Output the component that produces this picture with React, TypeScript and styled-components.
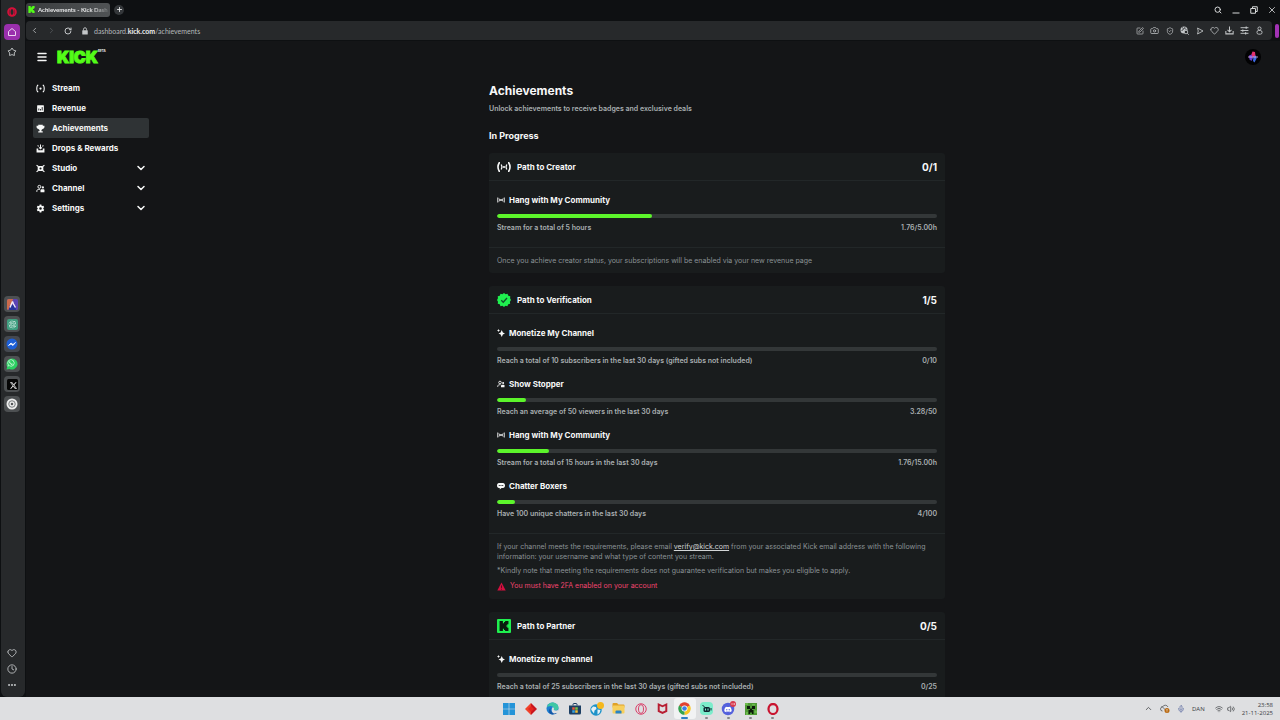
import React from "react";
import styled, { createGlobalStyle, css } from "styled-components";
import {
  Camera,
  ChevronDown,
  ChevronLeft,
  ChevronRight,
  ChevronUp,
  Clock,
  Ellipsis,
  Heart,
  Menu,
  Mic,
  Plus,
  RotateCw,
  Search,
  ShieldCheck,
  SquarePen,
  Volume2,
  Wifi,
  X,
} from "lucide-react";
import { SiKick, SiMcafee, SiOpenai } from "react-icons/si";
import { FaDiscord, FaWhatsapp, FaXTwitter } from "react-icons/fa6";

const color = {
  frame: "#0e1012",
  chrome: "#27292b",
  page: "#141517",
  card: "#191c1d",
  line: "#222728",
  track: "#333738",
  text: "#f7f8f8",
  soft: "#a9afb1",
  muted: "#8b9295",
  green: "#53fc18",
  pink: "#f0456f",
};

const GlobalStyle = createGlobalStyle`
  *, *::before, *::after { box-sizing: border-box; }
  body { margin: 0; background: ${color.frame}; }
  h1, h2, h3, h4, p, ul { margin: 0; padding: 0; }
  ul { list-style: none; }
  svg { display: block; flex: none; }
`;

const Desktop = styled.div`
  display: flex;
  flex-direction: column;
  height: 100vh;
  overflow: hidden;
  font-family: Inter, "Liberation Sans", sans-serif;
  color: ${color.text};
`;

const Browser = styled.div`
  display: flex;
  flex: 1;
  min-height: 0;
  background: ${color.frame};
`;

const bareButton = css`
  display: flex;
  align-items: center;
  justify-content: center;
  padding: 0;
  border: 0;
  background: none;
  color: inherit;
  font: inherit;
`;

/* ---------- Browser side rail ---------- */

const Rail = styled.aside`
  display: flex;
  flex-direction: column;
  align-items: center;
  justify-content: space-between;
  width: 24px;
  margin: 0 1px;
  padding: 4px 2px 4px 0;
  border-radius: 0 0 6px 6px;
  background: ${color.chrome};
  color: #c6c9cb;
`;

const RailGroup = styled.div<{ $gap: number; $top?: number }>`
  display: flex;
  flex-direction: column;
  gap: ${(p) => p.$gap}px;
  padding-top: ${(p) => p.$top ?? 0}px;
`;

const RailButton = styled.button<{ $fill?: string }>`
  ${bareButton}
  width: 16px;
  height: 16px;
  border-radius: 4px;
  background: ${(p) => p.$fill ?? "none"};
`;

/* ---------- Browser top bars ---------- */

const Window = styled.div`
  display: flex;
  flex-direction: column;
  flex: 1;
  min-width: 0;
`;

const TitleBar = styled.div`
  display: flex;
  align-items: center;
  height: 21px;
  padding: 0 2px 2px 0;
`;

const Tab = styled.button`
  ${bareButton}
  justify-content: flex-start;
  gap: 3px;
  width: 84px;
  height: 14px;
  padding: 0 2px;
  border-radius: 3px;
  background: linear-gradient(90deg, #3a3d3f, #505355);
  font-family: Lato, "Open Sans", sans-serif;
  font-size: 6px;
  line-height: 10px;
`;

const TabTitle = styled.span`
  flex: 1;
  white-space: nowrap;
  text-align: left;
  font-weight: 700;
  color: #e6e7e8;
  mask-image: linear-gradient(90deg, #000 75%, rgba(0, 0, 0, 0.2));
`;

const NewTab = styled.button`
  ${bareButton}
  width: 10px;
  height: 10px;
  margin-left: 4px;
  border-radius: 5px;
  background: #34373a;
  color: #e6e7e8;
`;

const WindowButtons = styled.div`
  display: flex;
  margin-left: auto;
  margin-right: -3px;
`;

const WindowButton = styled.button`
  ${bareButton}
  width: 18px;
  height: 18px;
  color: #d6d8d9;
`;

const AddressRow = styled.div`
  display: flex;
  align-items: center;
  gap: 3px;
  padding-right: 1px;
`;

const AddressBar = styled.div`
  display: flex;
  align-items: center;
  flex: 1;
  height: 19px;
  padding-right: 5px;
  border-radius: 4px;
  background: ${color.chrome};
  color: #c3c6c8;
`;

const BarButton = styled.button<{ $width: number; $dim?: boolean }>`
  ${bareButton}
  width: ${(p) => p.$width}px;
  height: 17px;
  color: ${(p) => (p.$dim ? "#595d60" : "#c3c6c8")};
`;

const Address = styled.button`
  ${bareButton}
  flex: 1;
  justify-content: flex-start;
  font-family: Lato, "Open Sans", sans-serif;
  font-size: 7px;
  line-height: 10px;
  color: #b4b8ba;

  strong {
    font-weight: 700;
    color: #f0f1f1;
  }
`;

const PanelHandle = styled.div`
  width: 4px;
  height: 14px;
  border-radius: 2px;
  background: #a232b4;
`;

/* ---------- Dashboard ---------- */

const Site = styled.div`
  display: flex;
  flex-direction: column;
  flex: 1;
  min-height: 0;
  margin-top: 1px;
  background: ${color.page};
`;

const SiteHeader = styled.header`
  display: flex;
  align-items: center;
  height: 32px;
  padding: 0 19px 0 10px;
`;

const MenuButton = styled.button`
  ${bareButton}
  width: 12px;
  height: 12px;
`;

const Wordmark = styled.a`
  display: flex;
  align-items: flex-start;
  margin-left: 9px;
  color: ${color.green};
  font-size: 16px;
  line-height: 16px;
  font-weight: 900;
  text-decoration: none;
  -webkit-text-stroke: 1px ${color.green};

  sup {
    font-size: 3px;
    line-height: 5px;
    font-weight: 700;
    color: ${color.text};
    -webkit-text-stroke: 0;
  }
`;

const Avatar = styled.button`
  ${bareButton}
  width: 16px;
  height: 16px;
  margin-left: auto;
  border-radius: 8px;
  background: #020203;
`;

const SiteBody = styled.div`
  display: flex;
  flex: 1;
  min-height: 0;
`;

const SideNav = styled.nav`
  width: 128px;
  padding: 5px 5px 0 7px;
`;

const navRow = css<{ $active?: boolean }>`
  display: flex;
  align-items: center;
  gap: 7px;
  width: 100%;
  height: 20px;
  padding: 0 2px 0 3px;
  border: 0;
  border-radius: 2px;
  background: ${(p) => (p.$active ? "#2f3335" : "none")};
  color: ${color.text};
  font-family: inherit;
  font-size: 8px;
  line-height: 12px;
  font-weight: 700;
  text-align: left;
  text-decoration: none;

  span {
    flex: 1;
  }
`;

const NavLink = styled.a<{ $active?: boolean }>`
  ${navRow}
`;

const NavToggle = styled.button<{ $active?: boolean }>`
  ${navRow}
`;

const Content = styled.main`
  flex: 1;
  overflow-y: auto;
  scrollbar-width: none;
  padding: 10px 8px 0;
`;

const Column = styled.div`
  max-width: 456px;
  margin: 0 auto;
`;

const PageTitle = styled.h1`
  font-size: 12px;
  line-height: 16px;
  font-weight: 700;
`;

const PageIntro = styled.p`
  margin-top: 5px;
  font-size: 7px;
  line-height: 10px;
  font-weight: 600;
  color: ${color.soft};
`;

const SectionTitle = styled.h2`
  margin: 16px 0 11px;
  font-size: 9px;
  line-height: 12px;
  font-weight: 700;
`;

const CardList = styled.div`
  display: flex;
  flex-direction: column;
  gap: 13px;
`;

const Card = styled.section`
  border-radius: 3px;
  background: ${color.card};
`;

const CardHeader = styled.header`
  display: flex;
  align-items: center;
  gap: 6px;
  height: 28px;
  padding: 0 8px;
  border-bottom: 1px solid ${color.line};
`;

const CardTitle = styled.h3`
  flex: 1;
  font-size: 8px;
  line-height: 12px;
  font-weight: 700;
`;

const CardCount = styled.span`
  font-size: 10px;
  line-height: 12px;
  font-weight: 700;
`;

const GoalList = styled.ul`
  display: flex;
  flex-direction: column;
  gap: 12px;
  padding: 13px 8px 14px;
`;

const GoalTitle = styled.h4`
  display: flex;
  align-items: center;
  gap: 4px;
  font-size: 8px;
  line-height: 12px;
  font-weight: 700;
`;

const GoalBar = styled.progress`
  display: block;
  appearance: none;
  width: 100%;
  height: 4px;
  margin: 8px 0 5px;
  border: 0;
  border-radius: 2px;
  overflow: hidden;
  background: ${color.track};

  &::-webkit-progress-bar {
    background: ${color.track};
  }
  &::-webkit-progress-value {
    border-radius: 2px;
    background: #5cf52b;
  }
`;

const GoalDetail = styled.div`
  display: flex;
  justify-content: space-between;
  font-size: 7px;
  line-height: 10px;
  font-weight: 600;
  color: ${color.soft};
`;

const CardFooter = styled.footer`
  display: flex;
  flex-direction: column;
  gap: 4px;
  padding: 8px 8px 7px;
  border-top: 1px solid ${color.line};
  font-size: 7px;
  line-height: 10px;
  color: ${color.muted};

  a {
    color: #d3d6d7;
  }
`;

const Warning = styled.p`
  display: flex;
  align-items: center;
  gap: 4px;
  line-height: 12px;
  color: ${color.pink};
`;

/* ---------- Taskbar ---------- */

const TaskBar = styled.footer`
  display: grid;
  grid-template-columns: 1fr auto 1fr;
  align-items: center;
  height: 23px;
  padding: 0 7px 0 8px;
  background: #dedfe1;
  color: #3a3c3f;
`;

const TaskList = styled.div`
  display: flex;
  grid-column: 2;
`;

const TaskButton = styled.button<{ $active?: boolean; $running?: boolean }>`
  ${bareButton}
  position: relative;
  width: 22px;
  height: 21px;

  ${(p) =>
    p.$active &&
    css`
      border-radius: 3px;
      background: #f1f2f3;
    `}

  ${(p) =>
    (p.$active || p.$running) &&
    css`
      &::after {
        content: "";
        position: absolute;
        bottom: 0;
        width: ${p.$active ? 7 : 3}px;
        height: 2px;
        border-radius: 1px;
        background: ${p.$active ? "#2f7fc4" : "#85878a"};
      }
    `}
`;

const Tray = styled.div`
  display: flex;
  align-items: center;
  justify-content: flex-end;
  gap: 7px;
  font-family: "Open Sans", "Noto Sans", sans-serif;
  font-size: 6px;
  line-height: 8px;
`;

const TrayGroup = styled.div`
  display: flex;
  gap: 4px;
  margin-left: 3px;
`;

const TrayClock = styled.time`
  text-align: right;
`;

/* ---------- Drawn icons ---------- */

const Glyph = ({
  size = 9,
  box = 16,
  children,
}: {
  size?: number;
  box?: number;
  children: React.ReactNode;
}) => (
  <svg width={size} height={size} viewBox={`0 0 ${box} ${box}`} fill="none" aria-hidden="true">
    {children}
  </svg>
);

const StreamIcon = () => (
  <Glyph>
    <circle cx="8" cy="8" r="2" fill="currentColor" />
    <path d="M4 2.500H2.500C1 5 1 11 2.500 13.500H4M12 2.500h1.500c1.500 2.500 1.500 8.500 0 11H12" stroke="currentColor" strokeWidth="1.900" />
  </Glyph>
);

const RevenueIcon = () => (
  <Glyph>
    <rect x="2" y="2" width="12" height="12" rx="1" fill="currentColor" />
    <path d="M5 11.500V8M8 11.500V9M11 11.500V5.500" stroke="#141517" strokeWidth="1.600" />
  </Glyph>
);

const TrophyIcon = () => (
  <Glyph>
    <path
      d="M4 1.500h8V3h3v2.500c0 2-1.500 3.300-3.300 3.500-.6 1-1.200 1.400-2 1.700V13H12v2H4v-2h2.300v-2.300C5.500 10.400 4.900 10 4.300 9 2.500 8.800 1 7.500 1 5.500V3h3z"
      fill="currentColor"
    />
  </Glyph>
);

const DropsIcon = () => (
  <Glyph>
    <path d="M1 8h3v3h8V8h3v7H1z" fill="currentColor" />
    <path d="M8 1v7M5.500 6 8 8.500 10.500 6M3 2.500l1.500 2M13 2.500l-1.500 2" stroke="currentColor" strokeWidth="1.800" />
  </Glyph>
);

const StudioIcon = () => (
  <Glyph>
    <rect x="3" y="3.500" width="10" height="9" rx="2" fill="currentColor" />
    <circle cx="8" cy="8" r="1.900" fill="#141517" />
    <path d="M1 2l3 2.500M15 2l-3 2.500M1 14l3-2.500M15 14l-3-2.500" stroke="currentColor" strokeWidth="2" />
  </Glyph>
);

const PeopleIcon = ({ size }: { size?: number }) => (
  <Glyph size={size}>
    <circle cx="6" cy="5" r="2.600" stroke="currentColor" strokeWidth="1.700" />
    <path d="M1.500 14v-1.500C1.500 10.500 3 9.500 5 9.500h2" stroke="currentColor" strokeWidth="1.700" />
    <circle cx="12.200" cy="6" r="2" fill="currentColor" />
    <path d="M8 14.500V11c0-1 .8-1.700 1.800-1.700h3.400c1 0 1.800.7 1.800 1.700v3.500z" fill="currentColor" />
  </Glyph>
);

const GearIcon = () => (
  <Glyph>
    <path
      fillRule="evenodd"
      d="M6.500 1h3l.4 2 1.200.7 2-.7 1.500 2.600L13 7v2l1.600 1.400-1.500 2.600-2-.7-1.200.7-.4 2h-3l-.4-2-1.200-.7-2 .7-1.500-2.600L3 9V7L1.400 5.600 2.900 3l2 .7L6.100 3zM8 5.700a2.300 2.300 0 100 4.600 2.300 2.300 0 000-4.600z"
      fill="currentColor"
    />
  </Glyph>
);

const CreatorIcon = () => (
  <Glyph size={14} box={28}>
    <circle cx="14" cy="14" r="2.200" fill="currentColor" />
    <path d="M8.500 9c1.800 3 1.800 7 0 10M19.500 9c-1.800 3-1.800 7 0 10" stroke="currentColor" strokeWidth="2.800" />
    <path d="M6 5.500H4.500c-3 5-3 12 0 17H6M22 5.500h1.500c3 5 3 12 0 17H22" stroke="currentColor" strokeWidth="3.200" />
  </Glyph>
);

const VerifiedIcon = () => (
  <Glyph size={14} box={28}>
    <path
      d="M14 0l3.300 2.700L21 1.600l1.500 3.900 4 .8-.3 4.200L28 14l-2.200 3.500.5 4.200-4 1L20.800 26.500 17 25.500 14 28l-3.200-2.500-3.800 1-1.500-3.800-4-1 .5-4.200L0 14l1.900-3.500-.4-4.200 4-.8L7 1.600l3.700 1.100z"
      fill="#1ff04f"
    />
    <path d="M8.500 14.500l4 4 7.500-8.500" stroke="#12502a" strokeWidth="2.600" />
  </Glyph>
);

const KickBadge = styled.span`
  display: flex;
  align-items: center;
  justify-content: center;
  width: 14px;
  height: 14px;
  border-radius: 1px;
  background: #1ff04f;
  color: #0a1a0e;
`;

const HangIcon = () => (
  <Glyph size={8}>
    <circle cx="8" cy="8" r="1.900" fill="currentColor" />
    <path d="M1.500 3v10M14.500 3v10" stroke="currentColor" strokeWidth="1.800" />
    <path d="M4 5c1.300 2 1.300 4 0 6M12 5c-1.300 2-1.300 4 0 6" stroke="currentColor" strokeWidth="1.900" />
  </Glyph>
);

const SparkleIcon = () => (
  <Glyph size={8}>
    <path d="M9.500 2l2.200 4.800L16 9l-4.300 2.200L9.500 16l-2.200-4.800L3 9l4.300-2.200z" fill="currentColor" />
    <path d="M3 0l1 2.200L6 3l-2 1-1 2-1-2-2-1 2-.8z" fill="currentColor" />
  </Glyph>
);

const ChatIcon = () => (
  <Glyph size={8}>
    <path d="M4 2h8c2.500 0 4 2 4 5s-1.500 5-4 5H9l-3.500 3v-3H4c-2.500 0-4-2-4-5s1.500-5 4-5z" fill="currentColor" />
    <path d="M3.500 7h9" stroke="#191c1d" strokeWidth="1.800" strokeDasharray="2.200 1.200" />
  </Glyph>
);

const WarningIcon = () => (
  <Glyph size={9}>
    <path d="M8 1l7.500 14H.5z" fill="#d3103f" />
    <path d="M8 6v4.500M8 12v1.500" stroke="#4a0a1c" strokeWidth="1.600" />
  </Glyph>
);

const HomeIcon = () => (
  <Glyph size={10} box={20}>
    <path d="M3 9l7-6 7 6v8H3z" stroke="#f0dcf4" strokeWidth="1.900" strokeLinejoin="round" />
  </Glyph>
);

const StarIcon = () => (
  <Glyph size={10} box={20}>
    <path
      d="M10 2l2.800 4.300 5 1.400-3.200 4.100.2 5.200-4.800-1.800L5.200 17l.2-5.200-3.200-4.100 5-1.400z"
      stroke="currentColor"
      strokeWidth="1.800"
      strokeLinejoin="round"
    />
  </Glyph>
);

const OperaIcon = ({ size, thin, fill = "#d5103a" }: { size: number; thin?: boolean; fill?: string }) => (
  <Glyph size={size} box={24}>
    <circle cx="12" cy="12" r={thin ? 10.500 : 9.500} stroke={fill} strokeWidth={thin ? 2 : 4} />
    <ellipse cx="12" cy="12" rx="5" ry="8.500" stroke={fill} strokeWidth={thin ? 2 : 3} />
  </Glyph>
);

const ArtIcon = () => (
  <Glyph size={11} box={22}>
    <rect width="22" height="22" rx="3" fill="#5c43b4" />
    <path d="M0 3a3 3 0 013-3h9L6 22H3a3 3 0 01-3-3z" fill="#cc6a4c" />
    <path d="M6 12h10l2 10H3z" fill="#27349c" />
    <path d="M11 5l-5 12M11 5l2 5 4 7" stroke="#f2eafa" strokeWidth="2.800" />
  </Glyph>
);

const DialIcon = () => (
  <Glyph size={12} box={24}>
    <circle cx="12" cy="12" r="11" fill="#eceded" />
    <circle cx="12" cy="12" r="6.500" stroke="#7a7d7f" strokeWidth="2" />
    <circle cx="12" cy="12" r="2.500" fill="#55585a" />
  </Glyph>
);

const AvatarArt = () => (
  <Glyph size={12} box={24}>
    <path d="M11 1l5 1 1 8-5 3-4-4z" fill="#e3316f" />
    <path d="M4 9l5-2 3 7-3 6-4-3z" fill="#6a3ed0" />
    <path d="M13 11l5-2 1 6-4 8-3-3z" fill="#3b6be4" />
    <path d="M2 12h20" stroke="#e9b9ec" strokeWidth="1.600" />
  </Glyph>
);

const BlockedGlobe = () => (
  <Glyph size={9} box={18}>
    <circle cx="8" cy="8" r="7" fill="#c3c6c8" />
    <path d="M4 3l3 2-1 3-3 1M10 2l-1 3 4 2" stroke="#27292b" strokeWidth="1.600" />
    <circle cx="12" cy="12" r="3.500" fill="#27292b" stroke="#c3c6c8" strokeWidth="1.600" />
    <path d="M14.500 14.500L17.500 17.500" stroke="#c3c6c8" strokeWidth="1.800" />
  </Glyph>
);

const FlowIcon = () => (
  <Glyph size={8}>
    <path d="M3 2l11 6-11 6 1.500-6z" stroke="currentColor" strokeWidth="1.700" strokeLinejoin="round" />
  </Glyph>
);

const DownloadIcon = () => (
  <Glyph size={9}>
    <path d="M8 1v9M4.500 7L8 10.500 11.500 7M1.500 9v5h13V9" stroke="currentColor" strokeWidth="1.800" />
  </Glyph>
);

const SetupIcon = () => (
  <Glyph size={9}>
    <path d="M1 3h14M1 8h14M1 13h14" stroke="currentColor" strokeWidth="1.700" />
    <path d="M11 1v4M5 6v4M10 11v4" stroke="currentColor" strokeWidth="2" />
  </Glyph>
);

const ProfileIcon = () => (
  <Glyph size={9}>
    <circle cx="8" cy="4.500" r="2.800" stroke="currentColor" strokeWidth="1.600" />
    <rect x="3.500" y="8" width="9" height="6.500" rx="3" stroke="currentColor" strokeWidth="1.600" />
  </Glyph>
);

const WindowsIcon = () => (
  <Glyph size={12} box={24}>
    <path d="M0 0h11.400v11.400H0zM12.600 0H24v11.400H12.600zM0 12.600h11.400V24H0zM12.600 12.600H24V24H12.600z" fill="#2494d8" />
  </Glyph>
);

const DiamondIcon = () => (
  <Glyph size={12} box={24}>
    <path d="M12 0L0 12l12 12z" fill="#f0432a" />
    <path d="M12 0l12 12-12 12z" fill="#c9151d" />
    <path d="M12 6l6 6-6 6-6-6z" fill="#e6261f" />
  </Glyph>
);

const EdgeIcon = () => (
  <Glyph size={13} box={26}>
    <circle cx="13" cy="13" r="12" fill="#1c7fd0" />
    <path d="M1.500 11C3 4 8 1 13 1c7 0 12 5 12 10 0 4-3 6-6 6-3.500 0-4-1.500-3.500-3C16 10 12 8 9 8c-4 0-6.500 1.500-7.500 3z" fill="#3fc7a4" />
    <path d="M9.500 11c-2 4 1 10 6.500 11 4 .5 6-1 7-2-2 3.500-6 5-10 5C5.500 24.500 3 17 9.500 11z" fill="#1558a8" />
    <path d="M13 10.500c3 0 3.500 2.500 2.500 4.500 1 2.500 5 3 8 1l2 5-9 2c-4-1-7-6-3.500-12.500z" fill="#dedfe1" />
  </Glyph>
);

const StoreIcon = () => (
  <Glyph size={12} box={24}>
    <path d="M8 5V3a2 2 0 012-2h4a2 2 0 012 2v2" stroke="#1d3f63" strokeWidth="2" />
    <path d="M0 5h24v15a3 3 0 01-3 3H3a3 3 0 01-3-3z" fill="#1d3f63" />
    <path d="M6.500 8.500h5v5h-5z" fill="#e8593b" />
    <path d="M12.500 8.500h5v5h-5z" fill="#7fc043" />
    <path d="M6.500 14.500h5v5h-5z" fill="#36a3e0" />
    <path d="M12.500 14.500h5v5h-5z" fill="#f5c033" />
  </Glyph>
);

const GlobeIcon = () => (
  <Glyph size={14} box={28}>
    <circle cx="12" cy="16" r="11.500" fill="#1d93c9" />
    <path d="M6 9l6 1 1 4-4 3-1 6-4-5-2-4zM15 15l6 1-2 6-4 3z" fill="#e6f1f4" />
    <circle cx="21" cy="7" r="7" fill="#f5b81d" />
  </Glyph>
);

const FolderIcon = () => (
  <Glyph size={13} box={26}>
    <path d="M1 4a2 2 0 012-2h7l3 3h10a2 2 0 012 2v4H1z" fill="#e0a126" />
    <rect x="1" y="7" width="24" height="16" rx="2" fill="#f7cf5c" />
    <path d="M7 23v-4a2 2 0 012-2h8a2 2 0 012 2v4z" fill="#2a83c4" />
  </Glyph>
);

const ChromeIcon = () => (
  <Glyph size={13} box={26}>
    <path d="M13 13L2.200 6.800A12.500 12.500 0 0123.800 6.800z" fill="#e2412f" />
    <path d="M13 13L23.800 6.800A12.500 12.500 0 0113 25.500z" fill="#f8c522" />
    <path d="M13 13v12.500A12.500 12.500 0 012.200 6.800z" fill="#34a350" />
    <circle cx="13" cy="13" r="6" fill="#fff" />
    <circle cx="13" cy="13" r="4.600" fill="#3c7de6" />
  </Glyph>
);

const RobotIcon = () => (
  <Glyph size={13} box={26}>
    <rect width="26" height="26" rx="8" fill="#7ceccb" />
    <rect x="7" y="10" width="13" height="10" rx="3" fill="#0c2430" />
    <path d="M9 10L5 6M22 12v5" stroke="#0c2430" strokeWidth="2" />
    <path d="M11 13v4M16 13v4" stroke="#7ceccb" strokeWidth="2.200" />
  </Glyph>
);

const DiscordIcon = () => (
  <Glyph size={15} box={30}>
    <circle cx="14" cy="16" r="12.500" fill="#5461dc" />
    <FaDiscord x={6} y={9} width={16} height={14} color="#fff" />
    <circle cx="24" cy="6" r="6" fill="#d83a4e" />
    <path d="M21 6h2M25 6h3" stroke="#fff" strokeWidth="2" />
  </Glyph>
);

const CreeperIcon = () => (
  <Glyph size={12} box={24}>
    <rect width="24" height="24" fill="#4f9a35" />
    <path d="M0 0h6v4H0zM14 2h6v3h-6zM2 18h4v6H2zM19 15h5v5h-5z" fill="#6cba4c" />
    <path d="M4 6h6v6H4zM14 6h6v6h-6zM10 11h4v3h3v8h-3v-3h-4v3H7v-8h3z" fill="#0d1a0a" />
  </Glyph>
);

const CloudAlert = () => (
  <Glyph size={10} box={20}>
    <path d="M5 14a4 4 0 010-8 6 6 0 0111 0M3 4l9 9" stroke="#55585c" strokeWidth="1.600" />
    <circle cx="14" cy="13" r="5" fill="#b96a12" />
    <path d="M14 10v3.500M14 15v1.200" stroke="#fff" strokeWidth="1.400" />
  </Glyph>
);

/* ---------- Data ---------- */

const navItems = [
  { label: "Stream", Icon: StreamIcon },
  { label: "Revenue", Icon: RevenueIcon },
  { label: "Achievements", Icon: TrophyIcon, active: true },
  { label: "Drops & Rewards", Icon: DropsIcon },
  { label: "Studio", Icon: StudioIcon, expands: true },
  { label: "Channel", Icon: PeopleIcon, expands: true },
  { label: "Settings", Icon: GearIcon, expands: true },
];

type Goal = {
  title: string;
  icon: React.ReactNode;
  detail: string;
  count: string;
  value: number;
  max: number;
};

type Path = {
  title: string;
  icon: React.ReactNode;
  count: string;
  goals: Goal[];
  footer?: React.ReactNode;
};

const paths: Path[] = [
  {
    title: "Path to Creator",
    icon: <CreatorIcon />,
    count: "0/1",
    goals: [
      {
        title: "Hang with My Community",
        icon: <HangIcon />,
        detail: "Stream for a total of 5 hours",
        count: "1.76/5.00h",
        value: 1.76,
        max: 5,
      },
    ],
    footer: <p>Once you achieve creator status, your subscriptions will be enabled via your new revenue page</p>,
  },
  {
    title: "Path to Verification",
    icon: <VerifiedIcon />,
    count: "1/5",
    goals: [
      {
        title: "Monetize My Channel",
        icon: <SparkleIcon />,
        detail: "Reach a total of 10 subscribers in the last 30 days (gifted subs not included)",
        count: "0/10",
        value: 0,
        max: 10,
      },
      {
        title: "Show Stopper",
        icon: <PeopleIcon size={8} />,
        detail: "Reach an average of 50 viewers in the last 30 days",
        count: "3.28/50",
        value: 3.28,
        max: 50,
      },
      {
        title: "Hang with My Community",
        icon: <HangIcon />,
        detail: "Stream for a total of 15 hours in the last 30 days",
        count: "1.76/15.00h",
        value: 1.76,
        max: 15,
      },
      {
        title: "Chatter Boxers",
        icon: <ChatIcon />,
        detail: "Have 100 unique chatters in the last 30 days",
        count: "4/100",
        value: 4,
        max: 100,
      },
    ],
    footer: (
      <>
        <p>
          If your channel meets the requirements, please email <a href="mailto:verify@kick.com">verify@kick.com</a> from
          your associated Kick email address with the following information: your username and what type of content you
          stream.
        </p>
        <p>*Kindly note that meeting the requirements does not guarantee verification but makes you eligible to apply.</p>
        <Warning>
          <WarningIcon />
          You must have 2FA enabled on your account
        </Warning>
      </>
    ),
  },
  {
    title: "Path to Partner",
    icon: (
      <KickBadge>
        <SiKick size={10} />
      </KickBadge>
    ),
    count: "0/5",
    goals: [
      {
        title: "Monetize my channel",
        icon: <SparkleIcon />,
        detail: "Reach a total of 25 subscribers in the last 30 days (gifted subs not included)",
        count: "0/25",
        value: 0,
        max: 25,
      },
    ],
  },
];

const toolbarItems = [
  { label: "Edit page", icon: <SquarePen size={8} /> },
  { label: "Snapshot", icon: <Camera size={9} /> },
  { label: "Ad blocker", icon: <ShieldCheck size={8} /> },
  { label: "Tracker blocking", icon: <BlockedGlobe /> },
  { label: "Send to Flow", icon: <FlowIcon /> },
  { label: "Pinboard", icon: <Heart size={9} /> },
  { label: "Downloads", icon: <DownloadIcon /> },
  { label: "Easy setup", icon: <SetupIcon /> },
  { label: "Profile", icon: <ProfileIcon /> },
];

const tasks = [
  { label: "Start", icon: <WindowsIcon /> },
  { label: "Launcher", icon: <DiamondIcon /> },
  { label: "Edge", icon: <EdgeIcon /> },
  { label: "Store", icon: <StoreIcon /> },
  { label: "Web assistant", icon: <GlobeIcon /> },
  { label: "File Explorer", icon: <FolderIcon /> },
  { label: "Opera GX", icon: <OperaIcon size={12} thin fill="#d9406a" /> },
  { label: "McAfee", icon: <SiMcafee size={11} color="#b81e32" /> },
  { label: "Chrome", icon: <ChromeIcon />, active: true },
  { label: "Streamlabs", icon: <RobotIcon />, running: true },
  { label: "Discord", icon: <DiscordIcon />, running: true },
  { label: "Minecraft", icon: <CreeperIcon />, running: true },
  {
    label: "Opera",
    icon: (
      <Glyph size={12} box={24}>
        <ellipse cx="12" cy="12" rx="9" ry="10" stroke="#c9142f" strokeWidth="4.500" />
      </Glyph>
    ),
    running: true,
  },
];

const PathCard = ({ path, id }: { path: Path; id: string }) => (
  <Card aria-labelledby={id}>
    <CardHeader>
      {path.icon}
      <CardTitle id={id}>{path.title}</CardTitle>
      <CardCount>{path.count}</CardCount>
    </CardHeader>
    <GoalList>
      {path.goals.map((goal, i) => (
        <li key={goal.title}>
          <GoalTitle id={`${id}-goal-${i}`}>
            {goal.icon}
            {goal.title}
          </GoalTitle>
          <GoalBar value={goal.value} max={goal.max} aria-labelledby={`${id}-goal-${i}`} />
          <GoalDetail>
            <span>{goal.detail}</span>
            <span>{goal.count}</span>
          </GoalDetail>
        </li>
      ))}
    </GoalList>
    {path.footer && <CardFooter>{path.footer}</CardFooter>}
  </Card>
);

export default function App() {
  return (
    <Desktop>
      <GlobalStyle />
      <Browser>
        <Rail>
          <RailGroup $gap={4}>
            <RailButton aria-label="Opera menu">
              <OperaIcon size={10} />
            </RailButton>
            <RailButton aria-label="Home" $fill="#9a2fad">
              <HomeIcon />
            </RailButton>
            <RailButton aria-label="Speed dials">
              <StarIcon />
            </RailButton>
          </RailGroup>
          <RailGroup $gap={4} $top={3}>
            <RailButton aria-label="Aria" $fill="#4d5052">
              <ArtIcon />
            </RailButton>
            <RailButton aria-label="ChatGPT" $fill="#4d5052">
              <Glyph size={11} box={22}>
                <rect width="22" height="22" rx="4" fill="#3f9f80" />
                <SiOpenai x={3} y={3} width={16} height={16} color="#d5ece4" />
              </Glyph>
            </RailButton>
            <RailButton aria-label="Messenger" $fill="#44484f">
              <Glyph size={12} box={24}>
                <circle cx="12" cy="12" r="11" fill="#1d5fd6" />
                <path d="M5 15l5-5 4 3 5-4-5 6-4-3z" fill="#fff" stroke="#fff" strokeWidth="1.500" />
              </Glyph>
            </RailButton>
            <RailButton aria-label="WhatsApp" $fill="#4d5052">
              <Glyph size={12} box={24}>
                <path d="M12 1a11 11 0 11-5 20.800L1 23l1.400-5.600A11 11 0 0112 1z" fill="#2ccf62" />
                <FaWhatsapp x={2} y={2} width={20} height={20} color="#f4fff7" />
              </Glyph>
            </RailButton>
            <RailButton aria-label="X" $fill="#4d5052">
              <Glyph size={11} box={22}>
                <rect width="22" height="22" rx="3" fill="#050505" />
                <FaXTwitter x={5} y={5} width={12} height={12} color="#f2f2f2" />
              </Glyph>
            </RailButton>
            <RailButton aria-label="Player" $fill="#4d5052">
              <DialIcon />
            </RailButton>
          </RailGroup>
          <RailGroup $gap={0}>
            <RailButton aria-label="Pinboards">
              <Heart size={10} />
            </RailButton>
            <RailButton aria-label="History">
              <Clock size={10} />
            </RailButton>
            <RailButton aria-label="More">
              <Ellipsis size={10} strokeWidth={3} />
            </RailButton>
          </RailGroup>
        </Rail>

        <Window>
          <TitleBar>
            <Tab>
              <SiKick size={7} color={color.green} />
              <TabTitle>Achievements - Kick Dash</TabTitle>
            </Tab>
            <NewTab aria-label="New tab">
              <Plus size={7} strokeWidth={3} />
            </NewTab>
            <WindowButtons>
              <WindowButton aria-label="Search tabs">
                <Search size={8} strokeWidth={3} />
              </WindowButton>
              <WindowButton aria-label="Minimize">
                <Glyph size={8}>
                  <path d="M1 14h14" stroke="currentColor" strokeWidth="2" />
                </Glyph>
              </WindowButton>
              <WindowButton aria-label="Restore">
                <Glyph size={8}>
                  <path d="M5 5V1.500h9.500V11H11M1.500 5H11v9.500H1.500z" stroke="currentColor" strokeWidth="2" />
                </Glyph>
              </WindowButton>
              <WindowButton aria-label="Close">
                <X size={10} strokeWidth={2} />
              </WindowButton>
            </WindowButtons>
          </TitleBar>

          <AddressRow>
            <AddressBar>
              <BarButton aria-label="Back" $width={16}>
                <ChevronLeft size={9} />
              </BarButton>
              <BarButton aria-label="Forward" $width={18} $dim>
                <ChevronRight size={9} />
              </BarButton>
              <BarButton aria-label="Reload" $width={16}>
                <RotateCw size={8} strokeWidth={3} />
              </BarButton>
              <BarButton aria-label="Site information" $width={18}>
                <Glyph size={8}>
                  <rect x="2.500" y="6.500" width="11" height="8.500" rx="1" fill="currentColor" />
                  <path d="M5 7V4.500a3 3 0 016 0V7" stroke="currentColor" strokeWidth="1.800" />
                </Glyph>
              </BarButton>
              <Address aria-label="Edit address">
                <span>
                  dashboard.<strong>kick.com</strong>/achievements
                </span>
              </Address>
              {toolbarItems.map((item) => (
                <BarButton key={item.label} aria-label={item.label} $width={15}>
                  {item.icon}
                </BarButton>
              ))}
            </AddressBar>
            <PanelHandle />
          </AddressRow>

          <Site>
            <SiteHeader>
              <MenuButton aria-label="Toggle menu">
                <Menu size={12} strokeWidth={3} />
              </MenuButton>
              <Wordmark href="#home">
                KICK<sup>BETA</sup>
              </Wordmark>
              <Avatar aria-label="Account">
                <AvatarArt />
              </Avatar>
            </SiteHeader>
            <SiteBody>
              <SideNav>
                {navItems.map(({ label, Icon, active, expands }) =>
                  expands ? (
                    <NavToggle key={label} aria-expanded={false}>
                      <Icon />
                      <span>{label}</span>
                      <ChevronDown size={12} strokeWidth={3} />
                    </NavToggle>
                  ) : (
                    <NavLink key={label} href={`#${label}`} $active={active}>
                      <Icon />
                      <span>{label}</span>
                    </NavLink>
                  ),
                )}
              </SideNav>
              <Content>
                <Column>
                  <PageTitle>Achievements</PageTitle>
                  <PageIntro>Unlock achievements to receive badges and exclusive deals</PageIntro>
                  <SectionTitle>In Progress</SectionTitle>
                  <CardList>
                    {paths.map((path, i) => (
                      <PathCard key={path.title} path={path} id={`path-${i}`} />
                    ))}
                  </CardList>
                </Column>
              </Content>
            </SiteBody>
          </Site>
        </Window>
      </Browser>

      <TaskBar>
        <TaskList>
          {tasks.map((task) => (
            <TaskButton key={task.label} aria-label={task.label} $active={task.active} $running={task.running}>
              {task.icon}
            </TaskButton>
          ))}
        </TaskList>
        <Tray>
          <ChevronUp size={9} />
          <CloudAlert />
          <Mic size={8} color="#5b6aa0" />
          <span>DAN</span>
          <TrayGroup>
            <Wifi size={8} />
            <Volume2 size={8} />
          </TrayGroup>
          <TrayClock dateTime="2025-11-21T23:58">
            23:58
            <br />
            21-11-2025
          </TrayClock>
        </Tray>
      </TaskBar>
    </Desktop>
  );
}
